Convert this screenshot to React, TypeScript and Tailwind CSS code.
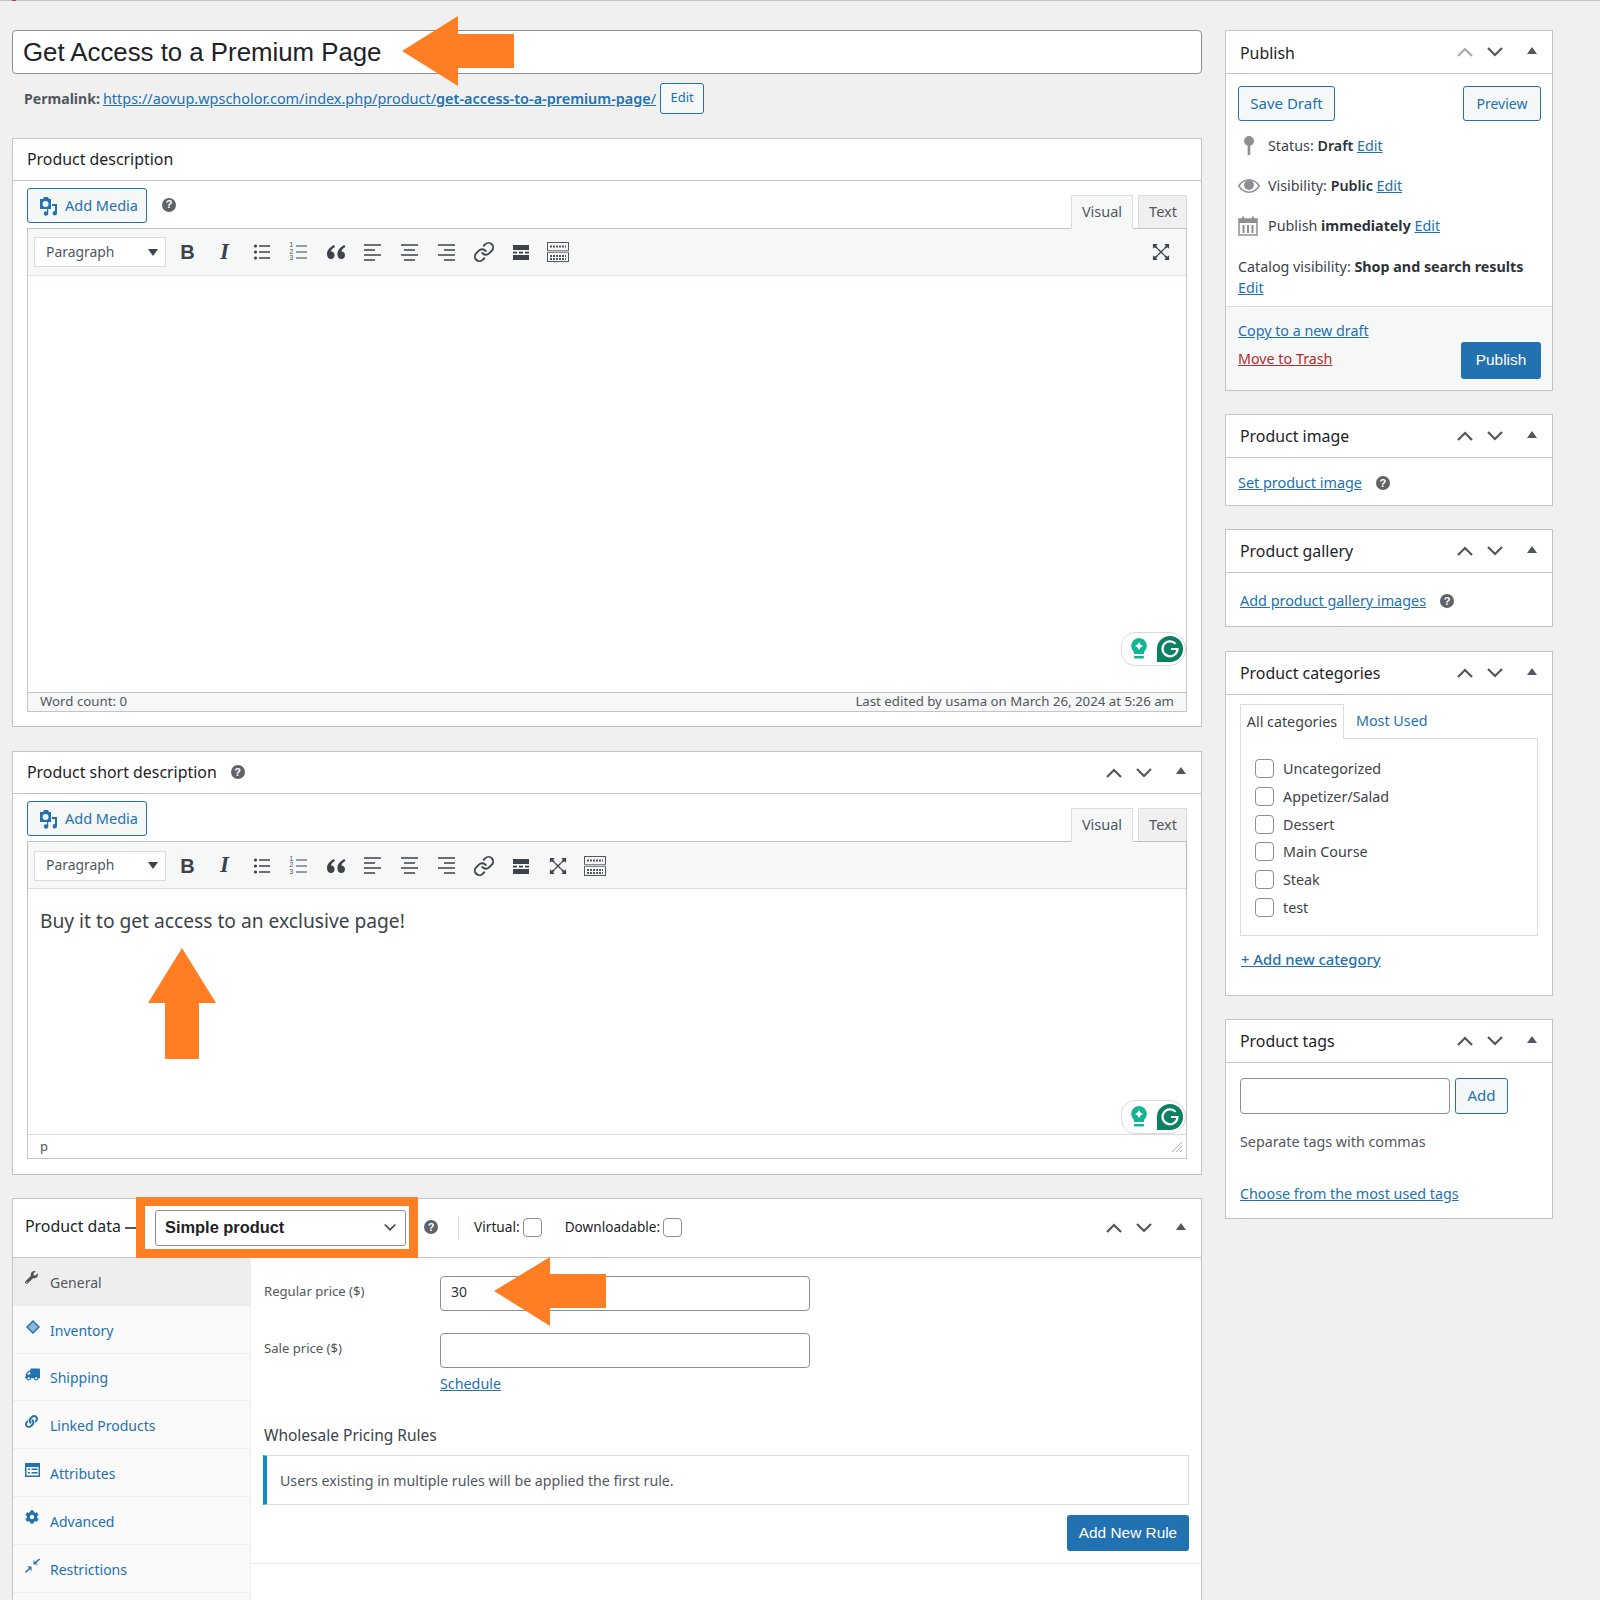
import React from "react";
import { FaWrench, FaTruck, FaCog, FaLink } from "react-icons/fa";
import { Link as LinkIcon } from "lucide-react";

const Help = ({ className = "" }: { className?: string }) => (
  <span className={"inline-flex w-[14px] h-[14px] rounded-full bg-[#5f6368] text-white text-[11px] font-bold items-center justify-center leading-none font-['Liberation_Sans'] " + className}>?</span>
);

const Chevron = ({ up, color, small }: { up?: boolean; color: string; small?: boolean }) => (
  <svg width={small ? 14 : 18} height={small ? 9 : 12} viewBox="0 0 18 12" fill="none" stroke={color} strokeWidth="2.2">
    <path d={up ? "M2 10 L9 3 L16 10" : "M2 2 L9 9 L16 2"} />
  </svg>
);

const Controls = ({ upColor = "#50575e" }: { upColor?: string }) => (
  <div className="flex items-center mr-[5px]">
    <span className="w-[30px] flex justify-center"><Chevron up color={upColor} /></span>
    <span className="w-[30px] flex justify-center"><Chevron color="#50575e" /></span>
    <span className="w-[30px] ml-[7px] flex justify-center">
      <svg width="10" height="7" viewBox="0 0 10 7" className="mb-[4px]"><path d="M5 0 L10 7 H0 Z" fill="#50575e" /></svg>
    </span>
  </div>
);

const PanelHeader = ({ children, upColor, tall, side }: { children: React.ReactNode; upColor?: string; tall?: boolean; side?: boolean }) => (
  <div className={"flex items-center justify-between border-b border-[#c3c4c7] pl-[14px] shrink-0 " + (side ? "h-[43px]" : "h-[42px]")}>
    <div className={"flex items-center text-[15.9px] text-[#1d2327] " + (tall ? "pt-[3px]" : side ? "pt-[1px]" : "")}>{children}</div>
    <Controls upColor={upColor} />
  </div>
);

const MediaIcon = () => (
  <svg width="22" height="22" viewBox="0 0 22 22" fill="#2271b1">
    <path d="M3 4 H6 L7 2 H11 L12 4 H14 V14 H3 Z M8.5 6 A3 3 0 1 0 8.6 12 A3 3 0 1 0 8.5 6 Z" fillRule="evenodd" />
    <path d="M15 9 H20 V18 A2.2 2.2 0 1 1 18 16 V11 H15 Z" />
    <circle cx="9" cy="18.5" r="2.2" />
    <path d="M10 12 H11.2 V18 H10 Z" />
  </svg>
);

const AddMedia = () => (
  <div className="w-[120px] h-[35px] border border-[#2271b1] rounded-[3px] bg-[#f6f7f7] flex items-center pl-[9px] gap-[6px] text-[#2271b1] text-[14.5px]">
    <MediaIcon />
    <span>Add Media</span>
  </div>
);

const Ico = ({ children }: { children: React.ReactNode }) => (
  <span className="w-[37px] h-[30px] flex items-center justify-center shrink-0">{children}</span>
);
const C = "#3c434a";
const Lines = ({ kind }: { kind: "l" | "c" | "r" }) => {
  const d = kind === "l"
    ? "M1 2 H18 M1 7 H12 M1 12 H18 M1 17 H12"
    : kind === "c"
    ? "M1 2 H18 M4 7 H15 M1 12 H18 M4 17 H15"
    : "M1 2 H18 M7 7 H18 M1 12 H18 M7 17 H18";
  return <svg width="19" height="19" viewBox="0 0 19 19" stroke={C} strokeWidth="1.7"><path d={d} /></svg>;
};
const Bullets = () => (
  <svg width="18" height="18" viewBox="0 0 18 18" stroke={C} strokeWidth="1.3" fill={C}>
    <circle cx="2.5" cy="3" r="1.6" stroke="none" /><circle cx="2.5" cy="9" r="1.6" stroke="none" /><circle cx="2.5" cy="15" r="1.6" stroke="none" />
    <path d="M6 3 H17 M6 9 H17 M6 15 H17" />
  </svg>
);
const Numbers = () => (
  <span className="relative w-[18px] h-[18px] block">
    <svg width="18" height="18" viewBox="0 0 18 18" stroke={C} strokeWidth="1.2"><path d="M6 3 H17 M6 9 H17 M6 15 H17" /></svg>
    <span className="absolute left-0 top-[-1px] text-[6.5px] leading-[6.5px] text-[#3c434a] font-['Liberation_Sans']">1<br />2<br />3</span>
  </span>
);
const Quote = () => (
  <svg width="20" height="16" viewBox="0 0 20 16" fill={C}>
    <path d="M8 1 C4 3 1 6 1 10 C1 13 2.6 15 5 15 C7.2 15 8.6 13.4 8.6 11.2 C8.6 9 7 7.6 5 7.6 C5.3 5.8 6.6 4.2 9 3 Z" />
    <path d="M18.4 1 C14.4 3 11.4 6 11.4 10 C11.4 13 13 15 15.4 15 C17.6 15 19 13.4 19 11.2 C19 9 17.4 7.6 15.4 7.6 C15.7 5.8 17 4.2 19.4 3 Z" />
  </svg>
);
const Hr = () => (
  <svg width="18" height="18" viewBox="0 0 18 18" fill={C}>
    <rect x="1" y="2" width="16" height="5" /><rect x="1" y="12" width="16" height="5" />
    <rect x="1" y="8.7" width="4" height="1.8" /><rect x="7" y="8.7" width="4" height="1.8" /><rect x="13" y="8.7" width="4" height="1.8" />
  </svg>
);
const Full = () => (
  <svg width="20" height="18" viewBox="0 0 20 20" fill={C}>
    <path d="M1 1 H6.5 L4.6 2.9 L8.5 8.5 L2.9 4.6 L1 6.5 Z" />
    <path d="M19 1 V6.5 L17.1 4.6 L11.5 8.5 L15.4 2.9 L13.5 1 Z" />
    <path d="M1 19 V13.5 L2.9 15.4 L8.5 11.5 L4.6 17.1 L6.5 19 Z" />
    <path d="M19 19 H13.5 L15.4 17.1 L11.5 11.5 L17.1 15.4 L19 13.5 Z" />
    <path d="M7 7 L13 13 M13 7 L7 13" stroke={C} strokeWidth="1.4" />
  </svg>
);
const Kb = () => (
  <svg width="22" height="20" viewBox="0 0 22 20" fill="none" stroke="#50575e">
    <rect x="0.5" y="0.5" width="21" height="8" /><rect x="0.5" y="10.5" width="21" height="9" />
    <rect x="0.5" y="8.5" width="21" height="2" fill="#c3c4c7" stroke="none" />
    <path d="M3 4.5 H19" strokeWidth="2" strokeDasharray="2 1" />
    <path d="M3 14 H19 M3 17 H19" strokeWidth="2" strokeDasharray="2 1" />
  </svg>
);

const Toolbar = ({ fullInline }: { fullInline?: boolean }) => (
  <div className={"h-[47px] bg-[#f6f7f7] border-b flex items-center pl-[6px] shrink-0 " + (fullInline ? "border-[#dcdcde] shadow-[0_1px_2px_rgba(0,0,0,0.2)] pt-[1px]" : "border-[#e2e4e7]")}>
    <div className="w-[132px] h-[30px] bg-white border border-[#dcdcde] flex items-center justify-between pl-[11px] pr-[7px] text-[13.9px] text-[#50575e]">
      <span>Paragraph</span>
      <svg width="10" height="7" viewBox="0 0 10 7"><path d="M0 0 H10 L5 7 Z" fill="#3c434a" /></svg>
    </div>
    <div className="w-[3px]" />
    <Ico><b className="font-['Liberation_Sans'] text-[20px] font-bold text-[#3c434a]">B</b></Ico>
    <Ico><i className="font-['Liberation_Serif'] text-[23px] font-bold text-[#3c434a]">I</i></Ico>
    <Ico><Bullets /></Ico>
    <Ico><Numbers /></Ico>
    <Ico><Quote /></Ico>
    <Ico><Lines kind="l" /></Ico>
    <Ico><Lines kind="c" /></Ico>
    <Ico><Lines kind="r" /></Ico>
    <Ico><LinkIcon size={22} color={C} strokeWidth={2} /></Ico>
    <Ico><Hr /></Ico>
    {fullInline ? <Ico><Full /></Ico> : null}
    <Ico><Kb /></Ico>
    {fullInline ? null : <span className="ml-auto mr-[7px]"><Ico><Full /></Ico></span>}
  </div>
);

const Grammarly = ({ className }: { className: string }) => (
  <div className={"absolute right-0 w-[65px] h-[34px] bg-white border border-[#d9d9e6] rounded-l-[14px] rounded-r-[17px] flex items-center justify-between pl-[8px] pr-[1px] " + className}>
    <svg width="18" height="24" viewBox="0 0 18 24">
      <path d="M9 1 A8 8 0 0 1 14 15 V17 H4 V15 A8 8 0 0 1 9 1 Z" fill="#11b594" />
      <path d="M9 5 L10.5 7.5 L13 9 L10.5 10.5 L9 13 L7.5 10.5 L5 9 L7.5 7.5 Z" fill="white" />
      <rect x="4" y="19" width="10" height="2.4" rx="1" fill="#11b594" />
    </svg>
    <svg width="28" height="28" viewBox="0 0 30 30">
      <path d="M15 1 A14 14 0 1 1 15 29 H1 V15 A14 14 0 0 1 15 1 Z" fill="#0b8062" />
      <path d="M21 9.5 A8 8 0 1 0 23 15 H16" fill="none" stroke="white" strokeWidth="2.4" />
    </svg>
  </div>
);

const Tabs = () => (
  <div className="flex items-end">
    <div className="w-[62px] h-[34px] mb-[-1px] bg-[#f6f7f7] border border-[#dcdcde] border-b-[#f6f7f7] flex items-center justify-center pb-[1px] text-[14.5px] text-[#50575e]">Visual</div>
    <div className="w-[49px] h-[33px] ml-[5px] pl-[1px] pb-[1px] bg-[#f0f0f1] border border-[#dcdcde] border-b-0 flex items-center justify-center text-[14.5px] text-[#50575e]">Text</div>
  </div>
);

const Btn = ({ className, children }: { className: string; children: React.ReactNode }) => (
  <div className={"border border-[#2271b1] rounded-[3px] bg-[#f6f7f7] flex items-center justify-center text-[#2271b1] " + className}>{children}</div>
);
const A = ({ className = "", children }: { className?: string; children: React.ReactNode }) => (
  <span className={"text-[#2271b1] underline " + className}>{children}</span>
);

const Pin = () => (
  <svg width="12" height="20" viewBox="0 0 12 20" fill="#8c8f94"><circle cx="6" cy="5" r="5" /><rect x="4.7" y="8" width="2.6" height="11" /></svg>
);
const Eye = () => (
  <svg width="22" height="14" viewBox="0 0 22 14"><path d="M0.8 7 C4 2 7.5 0.8 11 0.8 C14.5 0.8 18 2 21.2 7 C18 12 14.5 13.2 11 13.2 C7.5 13.2 4 12 0.8 7 Z" fill="none" stroke="#8c8f94" strokeWidth="1.4" /><circle cx="11" cy="6" r="5" fill="#8c8f94" /></svg>
);
const Cal = () => (
  <svg width="20" height="20" viewBox="0 0 20 20" fill="#8c8f94">
    <rect x="1" y="3" width="18" height="16" fill="none" stroke="#8c8f94" strokeWidth="1.5" />
    <rect x="1" y="3" width="18" height="4" /><rect x="4" y="0.5" width="2" height="4" /><rect x="14" y="0.5" width="2" height="4" />
    <rect x="4.5" y="9" width="2" height="8" /><rect x="9" y="9" width="2" height="8" /><rect x="13.5" y="9" width="2" height="8" />
  </svg>
);

const Arrow = ({ className, points, w, h }: { className: string; points: string; w: number; h: number }) => (
  <svg className={"absolute " + className} width={w} height={h} viewBox={`0 0 ${w} ${h}`}><polygon points={points} fill="#ff7e24" /></svg>
);

const Box = ({ label, children }: { label: string; children: React.ReactNode }) => (
  <div className="flex items-center h-[34px]"><span className="w-[176px] mb-[3px] text-[13.1px] text-[#50575e]">{label}</span>{children}</div>
);

const CheckBox = () => <span className="w-[19px] h-[19px] rounded-[4px] border border-[#8c8f94] bg-white block shrink-0" />;

const DataTab = ({ icon, label, active }: { icon: React.ReactNode; label: string; active?: boolean }) => (
  <div className={"h-[47.8px] flex items-center pl-[12px] pt-[2px] border-b border-[#eeeeee] text-[14px] " + (active ? "bg-[#eeeeee] text-[#50575e]" : "text-[#2271b1]")}>
    <span className="w-[25px] h-[16px] flex items-start mb-[6px]">{icon}</span>
    <span>{label}</span>
  </div>
);

export default function App() {
  return (
    <div className="relative w-[1600px] h-[1600px] overflow-hidden bg-[#f0f0f1] font-['Noto_Sans','Open_Sans',sans-serif] text-[14.3px] text-[#3c434a]">
      <div className="h-px bg-[#c3c4c7]" />
      <div className="absolute left-[12px] top-0 w-[4px] h-[1px] bg-[#d63638]" />
      <div className="flex items-start pl-[12px] pt-[29px]">
        {/* LEFT */}
        <div className="w-[1190px] shrink-0">
          <div className="h-[44px] border border-[#8c8f94] rounded-[4px] bg-white flex items-center pl-[10px] pt-[1px] font-['Liberation_Sans'] text-[25.8px] text-[#1d2327]">Get Access to a Premium Page</div>
          <div className="h-[31px] mt-[9px] flex items-center pl-[12px]">
            <b className="text-[14.1px] text-[#50575e] font-bold">Permalink:</b>
            <span className="ml-[3px] text-[14.45px] text-[#2271b1] underline">https://aovup.wpscholor.com/index.php/product/<b className="font-semibold">get-access-to-a-premium-page</b>/</span>
            <Btn className="ml-[4px] w-[44px] h-[31px] text-[13px] pb-[2px]">Edit</Btn>
          </div>

          {/* Description */}
          <div className="mt-[24px] h-[589px] bg-white border border-[#c3c4c7] flex flex-col">
            <div className="h-[42px] flex items-center border-b border-[#c3c4c7] pl-[14px] text-[15.9px] text-[#1d2327] shrink-0">Product description</div>
            <div className="px-[14px] flex flex-col flex-1 pb-[14px]">
              <div className="h-[47px] flex justify-between items-end shrink-0 z-10">
                <div className="flex items-center self-start mt-[7px]"><AddMedia /><Help className="ml-[15px] mb-[2px]" /></div>
                <Tabs />
              </div>
              <div className="relative flex-1 border border-[#c3c4c7] flex flex-col">
                <Toolbar />
                <div className="flex-1 bg-white" />
                <Grammarly className="bottom-[45px]" />
                <div className="h-[19px] border-t border-[#c3c4c7] bg-[#f6f7f7] flex items-center justify-between px-[12px] text-[13.25px] text-[#50575e] shrink-0">
                  <span>Word count: 0</span>
                  <span>Last edited by usama on March 26, 2024 at 5:26 am</span>
                </div>
              </div>
            </div>
          </div>

          {/* Short description */}
          <div className="mt-[24px] h-[424px] bg-white border border-[#c3c4c7] flex flex-col">
            <PanelHeader>Product short description<Help className="ml-[14px]" /></PanelHeader>
            <div className="px-[14px] flex flex-col flex-1 pb-[15px]">
              <div className="h-[47px] flex justify-between items-end shrink-0 z-10">
                <div className="self-start mt-[7px]"><AddMedia /></div>
                <Tabs />
              </div>
              <div className="relative flex-1 border border-[#c3c4c7] flex flex-col">
                <Toolbar fullInline />
                <div className="flex-1 bg-white px-[12px] pt-[19px] text-[19.2px] text-[#3c434a] leading-[26px]">Buy it to get access to an exclusive page!</div>
                <Grammarly className="bottom-[24px]" />
                <div className="h-[24px] border-t border-[#dcdcde] bg-white flex items-center justify-between pl-[12px] pr-[3px] text-[13px] text-[#50575e] shrink-0">
                  <span>p</span>
                  <svg width="12" height="12" viewBox="0 0 12 12" stroke="#a7aaad"><path d="M1 11 L11 1 M5 11 L11 5 M9 11 L11 9" /></svg>
                </div>
              </div>
            </div>
          </div>

          {/* Product data */}
          <div className="mt-[23px] h-[500px] bg-white border border-[#c3c4c7] flex flex-col">
            <div className="h-[59px] border-b border-[#c3c4c7] flex items-center justify-between shrink-0">
              <div className="flex items-center h-full">
                <span className="pl-[12px] pb-[3px] text-[15.9px] text-[#1d2327] w-[112px] whitespace-nowrap">Product data</span>
                <span className="w-[11px] h-[1.5px] bg-[#50575e]" />
                <div className="w-[282px] h-[61px] mb-[-1px] border-[9px] border-[#ff7e24] bg-white flex items-center pl-[10px] pr-[3px] -mt-[2px] shrink-0">
                  <div className="w-[253px] h-[36px] border border-[#8c8f94] rounded-[3px] flex items-center justify-between pl-[9px] pr-[8px] pb-[1px] font-['Liberation_Sans'] text-[16.4px] font-bold text-[#1d2327]">
                    <span>Simple product</span>
                    <Chevron color="#3c434a" small />
                  </div>
                </div>
                <Help className="ml-[6px] mb-[2px]" />
                <span className="w-px h-[24px] bg-[#dcdcde] ml-[20px]" />
                <span className="ml-[15px] pb-[2px] text-[13.7px] text-[#1d2327]">Virtual:</span>
                <span className="ml-[3px] mb-[2px]"><CheckBox /></span>
                <span className="ml-[23px] pb-[2px] text-[13.6px] text-[#1d2327]">Downloadable:</span>
                <span className="ml-[3px] mb-[2px]"><CheckBox /></span>
              </div>
              <Controls />
            </div>
            <div className="flex flex-1">
              <div className="w-[238px] bg-[#fafafa] border-r border-[#eeeeee] shrink-0">
                <DataTab active label="General" icon={<FaWrench size={13} color="#50575e" />} />
                <DataTab label="Inventory" icon={<svg width="16" height="16" viewBox="0 0 16 16"><path d="M8 1 L15 8 L8 15 L1 8 Z" fill="#2271b1" /><path d="M8 3 L13 8 L8 13 L3 8 Z" fill="#8fb6d6" /></svg>} />
                <DataTab label="Shipping" icon={<FaTruck size={15} color="#2271b1" className="-scale-x-100" />} />
                <DataTab label="Linked Products" icon={<FaLink size={13} color="#2271b1" />} />
                <DataTab label="Attributes" icon={<svg width="15" height="14" viewBox="0 0 15 14"><rect width="15" height="14" fill="#2271b1" /><rect x="1.5" y="4" width="12" height="8.5" fill="#fff" /><rect x="3" y="5.5" width="2" height="1.5" fill="#2271b1" /><rect x="3" y="9" width="2" height="1.5" fill="#2271b1" /><rect x="6.5" y="5.5" width="6" height="1.5" fill="#2271b1" /><rect x="6.5" y="9" width="6" height="1.5" fill="#2271b1" /></svg>} />
                <DataTab label="Advanced" icon={<FaCog size={14} color="#2271b1" />} />
                <DataTab label="Restrictions" icon={<svg width="15" height="15" viewBox="0 0 15 15" fill="#2271b1"><path d="M14 0.5 L15 1.5 L11 5.5 L13.5 6.5 H8.5 V1.5 L9.8 4.2 Z" /><path d="M0 14 L1 15 L5 11 L6.5 13.5 V8.5 H1.5 L4.2 9.8 Z" /></svg>} />
              </div>
              <div className="flex-1 min-w-0">
                <div className="h-[306px] border-b border-[#eeeeee] px-[12px] pt-[18px] flex flex-col">
                  <div className="pl-[1px]">
                    <Box label="Regular price ($)"><span className="w-[370px] h-[35px] border border-[#8c8f94] rounded-[4px] flex items-center pl-[10px] pb-[3px] text-[14px] text-[#2c3338]">30</span></Box>
                    <div className="h-[23px]" />
                    <Box label="Sale price ($)"><span className="w-[370px] h-[35px] border border-[#8c8f94] rounded-[4px] block" /></Box>
                    <div className="pl-[176px] mt-[7px] h-[20px] leading-[20px]"><A className="text-[14.3px]">Schedule</A></div>
                  </div>
                  <div className="mt-[29px] h-[24px] leading-[24px] pl-[1px] text-[15.5px] text-[#3c434a]">Wholesale Pricing Rules</div>
                  <div className="mt-[8px] h-[50px] border border-[#dcdcde] border-l-[4px] border-l-[#0a8fc9] flex items-center pl-[13px] pt-[1px] text-[14.2px] text-[#50575e] shrink-0">Users existing in multiple rules will be applied the first rule.</div>
                  <div className="flex justify-end mt-[10px]">
                    <div className="w-[122px] h-[36px] rounded-[3px] bg-[#2271b1] text-white flex items-center justify-center font-['Liberation_Sans'] text-[15.4px]">Add New Rule</div>
                  </div>
                </div>
              </div>
            </div>
          </div>
        </div>

        {/* RIGHT */}
        <div className="w-[328px] ml-[23px] shrink-0 flex flex-col">
          <div className="h-[361px] bg-white border border-[#c3c4c7] flex flex-col">
            <PanelHeader upColor="#a7aaad" side tall>Publish</PanelHeader>
            <div className="flex-1 pl-[12px] pr-[11px] pt-[12px]">
              <div className="flex justify-between">
                <Btn className="w-[97px] h-[35px] text-[15px]">Save Draft</Btn>
                <Btn className="w-[78px] h-[35px] text-[14px]">Preview</Btn>
              </div>
              <div className="mt-[5px] h-[40px] flex items-center"><span className="w-[30px]"><span className="w-[22px] flex justify-center"><Pin /></span></span>Status:&nbsp;<b className="font-semibold text-[#2c3338]">Draft</b>&nbsp;<A>Edit</A></div>
              <div className="h-[40px] flex items-center"><span className="w-[30px] flex justify-start"><Eye /></span>Visibility:&nbsp;<b className="font-semibold text-[#2c3338]">Public</b>&nbsp;<A>Edit</A></div>
              <div className="h-[40px] flex items-center"><span className="w-[30px] flex justify-start"><Cal /></span>Publish&nbsp;<b className="font-bold text-[#2c3338]">immediately</b>&nbsp;<A>Edit</A></div>
              <div className="mt-[10px] leading-[21px]">Catalog visibility: <b className="font-bold text-[#2c3338]">Shop and search results</b><br /><A>Edit</A></div>
            </div>
            <div className="h-[84px] bg-[#f6f7f7] border-t border-[#dcdcde] pl-[12px] pr-[11px] flex justify-between items-end pb-[11px] shrink-0">
              <div>
                <div className="h-[28px] leading-[26px]"><A>Copy to a new draft</A></div>
                <div className="h-[28px] leading-[26px] mb-[5px]"><span className="text-[#b32d2e] underline">Move to Trash</span></div>
              </div>
              <div className="w-[80px] h-[37px] pb-[1px] rounded-[3px] bg-[#2271b1] text-white flex items-center justify-center font-['Liberation_Sans'] text-[15.4px]">Publish</div>
            </div>
          </div>

          <div className="mt-[23px] h-[92px] bg-white border border-[#c3c4c7] flex flex-col">
            <PanelHeader side>Product image</PanelHeader>
            <div className="flex-1 flex items-center pl-[12px] pt-[3px] text-[14.4px]"><A>Set product image</A><Help className="ml-[14px]" /></div>
          </div>

          <div className="mt-[23px] h-[98px] bg-white border border-[#c3c4c7] flex flex-col">
            <PanelHeader side>Product gallery</PanelHeader>
            <div className="flex-1 flex items-center pl-[14px] pt-[3px] text-[14.4px]"><A>Add product gallery images</A><Help className="ml-[14px]" /></div>
          </div>

          <div className="mt-[24px] h-[345px] bg-white border border-[#c3c4c7] flex flex-col">
            <PanelHeader side>Product categories</PanelHeader>
            <div className="px-[14px] pt-[9px]">
              <div className="flex h-[34px]">
                <div className="w-[104px] h-[35px] border border-[#dcdcde] border-b-white z-10 flex items-center justify-center text-[#3c434a]">All categories</div>
                <div className="pl-[12px] flex items-center text-[#2271b1]">Most Used</div>
              </div>
              <div className="w-[298px] h-[198px] border border-[#dcdcde] pl-[14px] pt-[20px]">
                {["Uncategorized", "Appetizer/Salad", "Dessert", "Main Course", "Steak", "test"].map((t) => (
                  <div key={t} className="h-[27.8px] flex items-start gap-[9px]"><CheckBox /><span className="leading-[20px]">{t}</span></div>
                ))}
              </div>
              <div className="mt-[13px] pl-[1px] h-[20px] leading-[20px]"><A className="text-[14.8px] font-medium">+ Add new category</A></div>
            </div>
          </div>

          <div className="mt-[23px] h-[200px] bg-white border border-[#c3c4c7] flex flex-col">
            <PanelHeader side>Product tags</PanelHeader>
            <div className="px-[14px] pt-[15px]">
              <div className="flex gap-[5px]">
                <span className="w-[210px] h-[36px] border border-[#8c8f94] rounded-[4px] block" />
                <Btn className="w-[53px] h-[36px] pb-[2px] text-[15px]">Add</Btn>
              </div>
              <div className="mt-[17px] h-[22px] leading-[22px] text-[#50575e]">Separate tags with commas</div>
              <div className="mt-[30px] h-[22px] leading-[22px]"><A>Choose from the most used tags</A></div>
            </div>
          </div>
        </div>
      </div>

      {/* annotation arrows */}
      <Arrow className="left-[402px] top-[16px]" w={112} h={70} points="0,35 56,0 56,18 112,18 112,52 56,52 56,70" />
      <Arrow className="left-[148px] top-[948px]" w={68} h={111} points="34,0 68,55 51,55 51,111 17,111 17,55 0,55" />
      <Arrow className="left-[494px] top-[1257px]" w={112} h={69} points="0,34 56,0 56,17 112,17 112,51 56,51 56,69" />
    </div>
  );
}
